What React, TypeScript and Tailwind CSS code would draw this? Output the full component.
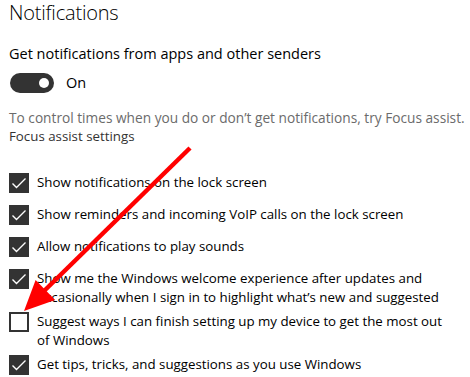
const font = { fontFamily: '"Open Sans", "Liberation Sans", sans-serif' };

type Item = { label: string; checked: boolean };

const items: Item[] = [
  { label: "Show notifications on the lock screen", checked: true },
  { label: "Show reminders and incoming VoIP calls on the lock screen", checked: true },
  { label: "Allow notifications to play sounds", checked: true },
  {
    label:
      "Show me the Windows welcome experience after updates and occasionally when I sign in to highlight what’s new and suggested",
    checked: true,
  },
  {
    label: "Suggest ways I can finish setting up my device to get the most out of Windows",
    checked: false,
  },
  { label: "Get tips, tricks, and suggestions as you use Windows", checked: true },
];

function Checkbox({ checked }: { checked: boolean }) {
  if (!checked) {
    return <div className="h-5 w-5 shrink-0 border-2 border-[#333333] bg-white" />;
  }
  return (
    <div className="flex h-5 w-5 shrink-0 items-center justify-center bg-[#333333]">
      <svg width="20" height="20" viewBox="0 0 20 20" fill="none">
        <path d="M3.5 10.5 L7.5 14.5 L16.5 5.5" stroke="white" strokeWidth="1.4" />
      </svg>
    </div>
  );
}

export default function App() {
  return (
    <div
      className="relative h-[377px] w-[470px] overflow-hidden bg-white pl-[9px] text-black"
      style={font}
    >
      {/* Header */}
      <h1 className="text-[20px] font-light leading-[26px] tracking-[-0.2px]">Notifications</h1>

      <p className="mt-[18px] text-[14.5px] leading-[19px]">
        Get notifications from apps and other senders
      </p>

      {/* Toggle */}
      <div className="mt-[10px] flex h-5 items-center gap-3">
        <div className="ml-px flex h-5 w-[44px] items-center justify-end rounded-full bg-[#333333] pr-[5px]">
          <div className="h-[10px] w-[10px] rounded-full bg-white" />
        </div>
        <span className="text-[14.5px]">On</span>
      </div>

      <p className="mt-[15px] whitespace-nowrap text-[13.7px] leading-[19px] text-[#6b6b6b]">
        To control times when you do or don’t get notifications, try Focus assist.
      </p>
      <p className="text-[13.3px] leading-[19px] text-[#333333]">Focus assist settings</p>

      {/* Options */}
      <div className="mt-[24px] pr-[20px]">
        {items.map((it) => (
          <div key={it.label} className="flex min-h-[32px] items-start gap-2 pt-[3px] pb-[3px]">
            <Checkbox checked={it.checked} />
            <span className="text-[13.3px] leading-[18.5px]">{it.label}</span>
          </div>
        ))}
      </div>

      {/* Red annotation arrow */}
      <svg
        className="pointer-events-none absolute inset-0"
        width="470"
        height="377"
        viewBox="0 0 470 377"
      >
        <line x1="190" y1="148" x2="42" y2="293" stroke="#ff0000" strokeWidth="4.5" />
        <polygon points="24,311 35.6,280 55.2,300" fill="#ff0000" />
      </svg>
    </div>
  );
}
